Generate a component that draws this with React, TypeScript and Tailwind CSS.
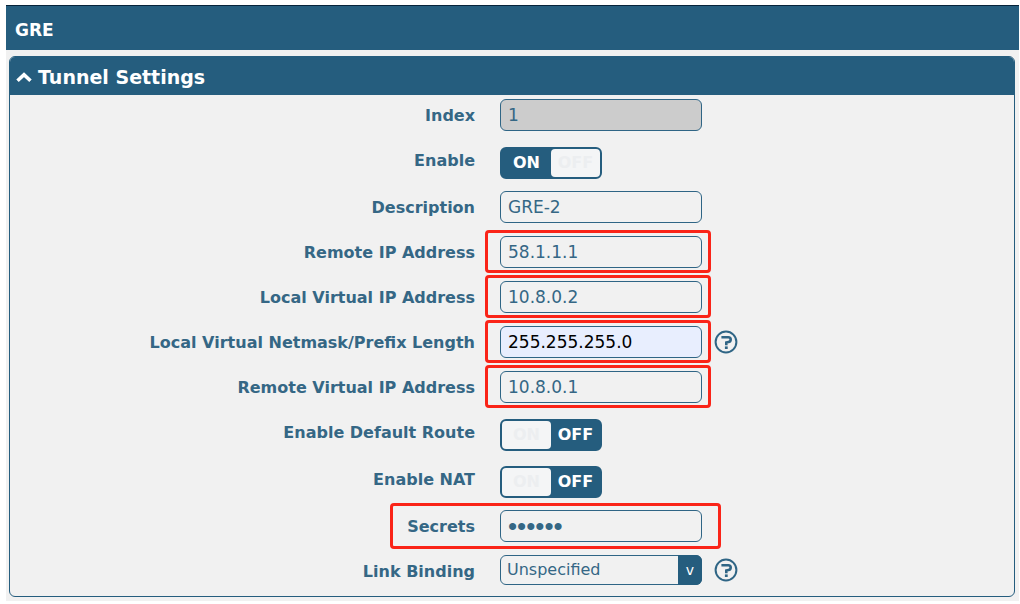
import { useState, type ReactNode } from "react";

function HelpIcon() {
  return (
    <button type="button" aria-label="Help" className="ml-3 size-6 shrink-0 text-[#2f6585]">
      <svg viewBox="0 0 24 24" className="size-6" fill="none" stroke="currentColor">
        <circle cx="12" cy="12" r="10.4" strokeWidth="2" />
        <path d="M7.4 7.3H14.2C17.6 7.3 17.4 11.8 14.4 12L12.3 12.6V15.2" strokeWidth="2.6" />
        <path d="M12.3 16.4V19" strokeWidth="2.8" />
      </svg>
    </button>
  );
}

type RowProps = {
  id: string;
  label: string;
  tall?: boolean;
  help?: boolean;
  children: ReactNode;
};

function Row({ id, label, tall = false, help = false, children }: RowProps) {
  return (
    <div className={`flex items-start ${tall ? "h-[47px]" : "h-[45px]"}`}>
      <label
        htmlFor={id}
        className="mt-1 w-[calc(50%-12px)] shrink-0 pr-[25px] text-right text-base leading-[34px] font-bold"
      >
        {label}
      </label>
      <div className={`flex items-center ${tall ? "mt-[7px]" : "mt-1"}`}>
        {children}
        {help && <HelpIcon />}
      </div>
    </div>
  );
}

const boxes = {
  none: "",
  field: "-top-[6px] -right-[9px] -bottom-[5px] -left-[15px]",
  row: "-top-[7px] -right-[19px] -bottom-[7px] -left-[110px]",
};

type FieldProps = {
  id: string;
  value: string;
  type?: string;
  disabled?: boolean;
  filled?: boolean;
  mark?: keyof typeof boxes;
};

function Field({ id, value, type = "text", disabled, filled, mark = "none" }: FieldProps) {
  const [text, setText] = useState(value);
  const tone = disabled
    ? "bg-[#cccccc]"
    : filled
      ? "bg-[#e8eefe] text-black"
      : "bg-transparent";
  const size =
    type === "password" ? "font-['Liberation_Sans',sans-serif] text-[26px]" : "text-[17px]";
  return (
    <div className="relative">
      <input
        id={id}
        type={type}
        value={text}
        disabled={disabled}
        onChange={(e) => setText(e.target.value)}
        className={`block h-8 w-[202px] rounded-md border border-[#2f6585] px-[7px] outline-none ${size} ${tone}`}
      />
      {mark !== "none" && (
        <span
          className={`pointer-events-none absolute rounded-sm border-[3px] border-[#fa2418] ${boxes[mark]}`}
        />
      )}
    </div>
  );
}

function Toggle({ id, initial }: { id: string; initial: boolean }) {
  const [on, setOn] = useState(initial);
  const active = "text-white";
  const knob = "rounded-[4px] bg-[#f4f5f6] text-[#eceef0]";
  return (
    <span className="relative flex h-8 w-[102px] rounded-md border-2 border-[#255d7e] bg-[#255d7e] text-base leading-7 font-bold">
      <input
        id={id}
        type="checkbox"
        role="switch"
        checked={on}
        onChange={(e) => setOn(e.target.checked)}
        className="absolute inset-0 size-full cursor-pointer opacity-0"
      />
      <span aria-hidden="true" className={`flex-1 text-center ${on ? active : knob}`}>
        ON
      </span>
      <span aria-hidden="true" className={`flex-1 text-center ${on ? knob : active}`}>
        OFF
      </span>
    </span>
  );
}

export default function App() {
  const [open, setOpen] = useState(true);
  return (
    <div className="bg-white pt-[5px] pr-px pb-1 pl-[6px] font-['DejaVu_Sans',Verdana,sans-serif] text-[#356785]">
      <main className="bg-[#f1f1f1] pb-1">
        <h1 className="border-t border-[#06233a] bg-[#255d7e] pt-1 pl-[9px] text-[17px] leading-10 font-bold text-white">
          GRE
        </h1>
        <section className="mr-1 ml-[3px] mt-[6px] overflow-hidden rounded-md border border-[#255d7e]">
          <h2>
            <button
              type="button"
              aria-expanded={open}
              onClick={() => setOpen(!open)}
              className="flex h-[38px] w-full items-center gap-[6px] bg-[#255d7e] pt-[2px] pl-[6px] text-[19px] font-bold text-white"
            >
              <svg
                viewBox="0 0 16 12"
                className={`h-3 w-4 ${open ? "" : "rotate-180"}`}
                fill="none"
                stroke="currentColor"
                strokeWidth="3.6"
              >
                <path d="M1.5 9.8L8 3.8L14.5 9.8" />
              </svg>
              <span>Tunnel Settings</span>
            </button>
          </h2>
          {open && (
            <form onSubmit={(e) => e.preventDefault()}>
              <Row id="index" label="Index">
                <Field id="index" value="1" disabled />
              </Row>
              <Row id="enable" label="Enable" tall>
                <Toggle id="enable" initial />
              </Row>
              <Row id="description" label="Description">
                <Field id="description" value="GRE-2" />
              </Row>
              <Row id="remote-ip" label="Remote IP Address">
                <Field id="remote-ip" value="58.1.1.1" mark="field" />
              </Row>
              <Row id="local-vip" label="Local Virtual IP Address">
                <Field id="local-vip" value="10.8.0.2" mark="field" />
              </Row>
              <Row id="netmask" label="Local Virtual Netmask/Prefix Length" help>
                <Field id="netmask" value="255.255.255.0" filled mark="field" />
              </Row>
              <Row id="remote-vip" label="Remote Virtual IP Address">
                <Field id="remote-vip" value="10.8.0.1" mark="field" />
              </Row>
              <Row id="default-route" label="Enable Default Route" tall>
                <Toggle id="default-route" initial={false} />
              </Row>
              <Row id="nat" label="Enable NAT" tall>
                <Toggle id="nat" initial={false} />
              </Row>
              <Row id="secrets" label="Secrets">
                <Field id="secrets" type="password" value="secret" mark="row" />
              </Row>
              <Row id="link-binding" label="Link Binding" help>
                <div className="relative">
                  <select
                    id="link-binding"
                    className="block h-[30px] w-[202px] appearance-none rounded-md border border-[#2f6585] bg-transparent pl-[6px] text-base outline-none"
                  >
                    <option>Unspecified</option>
                  </select>
                  <span
                    aria-hidden="true"
                    className="pointer-events-none absolute inset-y-0 right-0 w-6 rounded-r-md bg-[#255d7e] text-center text-sm leading-[30px] text-white"
                  >
                    v
                  </span>
                </div>
              </Row>
            </form>
          )}
        </section>
      </main>
    </div>
  );
}
